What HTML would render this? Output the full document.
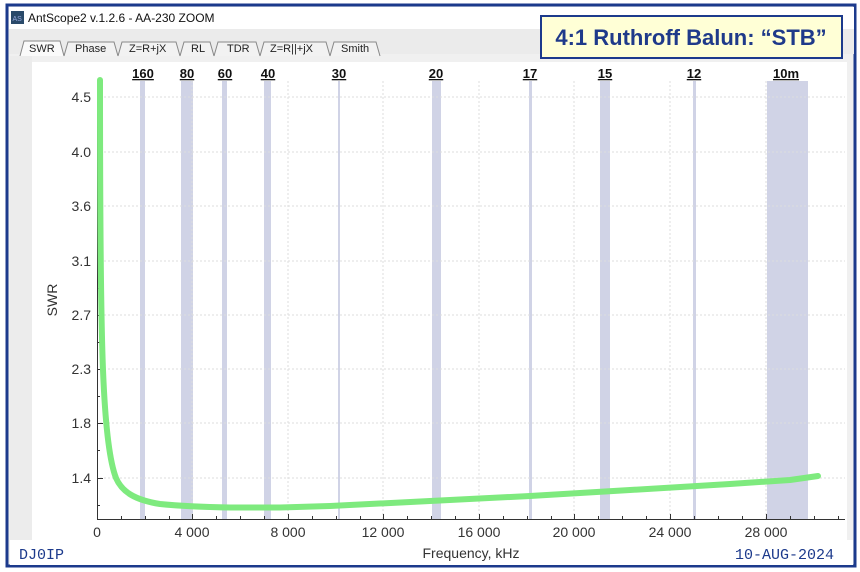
<!DOCTYPE html>
<html><head><style>
body{margin:0;width:860px;height:572px;background:#fff;position:relative;overflow:hidden;font-family:"Liberation Sans",sans-serif}
</style></head><body>
<svg width="860" height="572" style="position:absolute;left:0;top:0" font-family="Liberation Sans, sans-serif">
<rect x="0" y="0" width="860" height="572" fill="#fff"/>
<rect x="7" y="5" width="848" height="561" fill="#f0f0f0" stroke="#1c3a8c" stroke-width="3"/>
<rect x="9" y="7" width="845" height="22" fill="#fff"/>
<rect x="11" y="11" width="13" height="13" fill="#2a4a6a"/>
<text x="12.5" y="21" font-size="7" fill="#9ad">AS</text>
<text x="28" y="22" font-size="12" fill="#111">AntScope2 v.1.2.6 - AA-230 ZOOM</text>
<rect x="9" y="29" width="845" height="25" fill="#ebebeb"/>
<g font-size="11" fill="#222" stroke="none">
<path d="M20 56 L24 41 L60 41 L64 56" fill="#fafafa" stroke="#888"/><text x="29" y="52">SWR</text>
<path d="M64 56 L68 42 L114 42 L118 56" fill="#f2f2f2" stroke="#888"/><text x="75" y="52">Phase</text>
<path d="M118 56 L122 42 L176 42 L180 56" fill="#f2f2f2" stroke="#888"/><text x="129" y="52">Z=R+jX</text>
<path d="M180 56 L184 42 L210 42 L214 56" fill="#f2f2f2" stroke="#888"/><text x="191" y="52">RL</text>
<path d="M214 56 L218 42 L256 42 L260 56" fill="#f2f2f2" stroke="#888"/><text x="227" y="52">TDR</text>
<path d="M260 56 L264 42 L326 42 L330 56" fill="#f2f2f2" stroke="#888"/><text x="270" y="52">Z=R||+jX</text>
<path d="M330 56 L334 42 L376 42 L380 56" fill="#f2f2f2" stroke="#888"/><text x="341" y="52">Smith</text>
</g>
<rect x="10" y="56" width="22" height="484" fill="#ececec"/>
<rect x="32" y="62" width="815" height="478" fill="#fff"/>
<rect x="10" y="540" width="843" height="25" fill="#fff"/>
<g fill="#d0d3e6">
<rect x="140" y="81" width="5" height="438"/>
<rect x="181" y="81" width="12" height="438"/>
<rect x="222" y="81" width="5" height="438"/>
<rect x="264" y="81" width="7" height="438"/>
<rect x="338" y="81" width="2" height="438"/>
<rect x="432" y="81" width="9" height="438"/>
<rect x="529" y="81" width="3" height="438"/>
<rect x="600" y="81" width="10" height="438"/>
<rect x="693" y="81" width="3" height="438"/>
<rect x="767" y="81" width="41" height="438"/>
</g>
<g stroke="#ddd" stroke-dasharray="2,2" stroke-width="1">
<line x1="100" y1="97" x2="845" y2="97"/><line x1="100" y1="152" x2="845" y2="152"/>
<line x1="100" y1="206" x2="845" y2="206"/><line x1="100" y1="261" x2="845" y2="261"/>
<line x1="100" y1="315" x2="845" y2="315"/><line x1="100" y1="369" x2="845" y2="369"/>
<line x1="100" y1="423" x2="845" y2="423"/><line x1="100" y1="478" x2="845" y2="478"/>
<line x1="192" y1="81" x2="192" y2="519"/><line x1="288" y1="81" x2="288" y2="519"/>
<line x1="383" y1="81" x2="383" y2="519"/><line x1="479" y1="81" x2="479" y2="519"/>
<line x1="574" y1="81" x2="574" y2="519"/><line x1="670" y1="81" x2="670" y2="519"/>
<line x1="766" y1="81" x2="766" y2="519"/>
</g>
<g stroke="#333" stroke-width="1">
<line x1="97.5" y1="80" x2="97.5" y2="519"/>
<line x1="97" y1="519.5" x2="845" y2="519.5"/>
<path d="M97 97.5h6M97 152.5h6M97 206.5h6M97 261.5h6M97 315.5h6M97 369.5h6M97 423.5h6M97 478.5h6"/>
<path d="M97 124.5h3M97 179.5h3M97 233.5h3M97 288.5h3M97 342.5h3M97 396.5h3M97 450.5h3M97 505.5h3"/>
<path d="M192.5 514v5M288.5 514v5M383.5 514v5M479.5 514v5M574.5 514v5M670.5 514v5M766.5 514v5"/>
<path d="M121.5 516v3M145.5 516v3M169.5 516v3M216.5 516v3M240.5 516v3M264.5 516v3M312.5 516v3M336.5 516v3M360.5 516v3M407.5 516v3M431.5 516v3M455.5 516v3M503.5 516v3M527.5 516v3M551.5 516v3M598.5 516v3M622.5 516v3M646.5 516v3M694.5 516v3M718.5 516v3M742.5 516v3M790.5 516v3M814.5 516v3M838.5 516v3"/>
</g>
<g font-size="14" fill="#333" text-anchor="end">
<text x="91" y="102">4.5</text><text x="91" y="157">4.0</text><text x="91" y="211">3.6</text>
<text x="91" y="266">3.1</text><text x="91" y="320">2.7</text><text x="91" y="374">2.3</text>
<text x="91" y="428">1.8</text><text x="91" y="483">1.4</text>
</g>
<g font-size="14" fill="#333" text-anchor="middle">
<text x="97" y="537">0</text><text x="192" y="537">4 000</text><text x="288" y="537">8 000</text>
<text x="383" y="537">12 000</text><text x="479" y="537">16 000</text><text x="574" y="537">20 000</text>
<text x="670" y="537">24 000</text><text x="766" y="537">28 000</text>
<text x="471" y="558">Frequency, kHz</text>
</g>
<text x="57" y="300" font-size="14" fill="#333" text-anchor="middle" transform="rotate(-90 57 300)">SWR</text>
<g font-size="13" font-weight="bold" fill="#111" text-anchor="middle" text-decoration="underline">
<text x="143" y="78">160</text><text x="187" y="78">80</text><text x="225" y="78">60</text>
<text x="268" y="78">40</text><text x="339" y="78">30</text><text x="436" y="78">20</text>
<text x="530" y="78">17</text><text x="605" y="78">15</text><text x="694" y="78">12</text>
<text x="786" y="78">10m</text>
</g>
<path d="M100 80 C100 220 101 320 103 370 C105 420 109 460 116 478 C122 492 135 500 160 504 C180 506 200 507 230 507.5 L280 507.5 L330 506 L430 501 L530 496 L630 490 L730 484 L790 480 L818 476" fill="none" stroke="#7eea7e" stroke-width="6" stroke-linejoin="round" stroke-linecap="round"/>
<text x="19" y="559" font-family="Liberation Mono, monospace" font-size="15" fill="#1c3a8c">DJ0IP</text>
<text x="834" y="559" font-family="Liberation Mono, monospace" font-size="15" fill="#1c3a8c" text-anchor="end">10-AUG-2024</text>
<rect x="541" y="16" width="301" height="42" fill="#ffffd6" stroke="#1c3a8c" stroke-width="2"/>
<text x="691" y="45" font-size="22" font-weight="bold" fill="#1f3a8a" text-anchor="middle">4:1 Ruthroff Balun: “STB”</text>
</svg>
</body></html>
